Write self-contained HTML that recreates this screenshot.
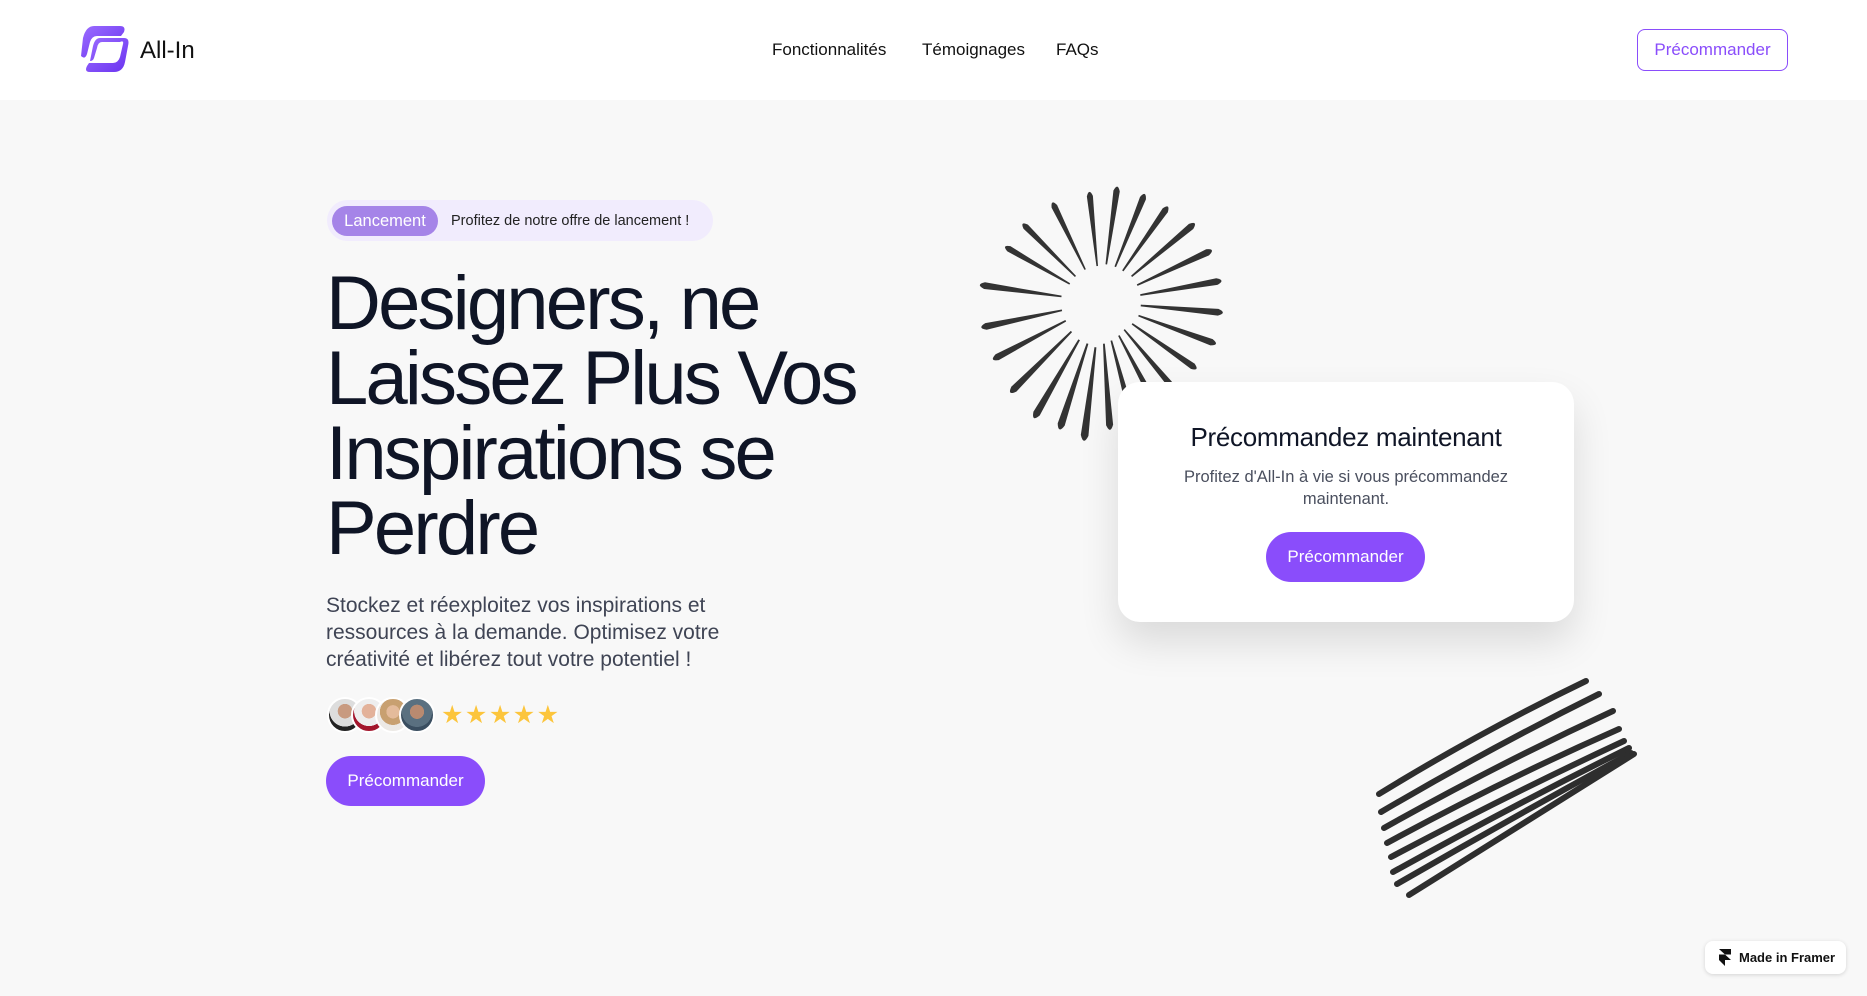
<!DOCTYPE html>
<html><head><meta charset="utf-8"><style>
*{margin:0;padding:0;box-sizing:border-box}
body{width:1867px;height:996px;overflow:hidden;background:#f8f8f8;font-family:"Liberation Sans",sans-serif;position:relative;color:#0f1526}
.nav{position:absolute;left:0;top:0;width:1867px;height:100px;background:#fff}
.abs{position:absolute}
.nl{position:absolute;top:40px;font-size:17px;color:#111}
.btn{position:absolute;background:#8a4dfb;color:#fff;border-radius:30px;display:flex;align-items:center;justify-content:center;font-size:17px}
h1{position:absolute;left:326px;top:266px;font-size:76px;line-height:75px;font-weight:400;letter-spacing:-2.8px;color:#0f1526;width:600px}
</style></head><body>
<div class="nav">
 <svg class="abs" style="left:80px;top:24px" width="52" height="51" viewBox="0 0 52 51">
  <defs><linearGradient id="g" x1="0" y1="0" x2="1" y2="1"><stop offset="0" stop-color="#9b6cff"/><stop offset="1" stop-color="#6a33f0"/></linearGradient></defs>
  <path d="M14 2 H40 Q46 2 44 8 L41 12 H17 Q12 12 10 18 L7 30 Q5 36 1 32 L3 14 Q6 2 14 2Z" fill="url(#g)"/>
  <path d="M20 14 H44 Q50 14 48 22 L45 38 Q43 48 34 48 H10 Q4 48 7 42 L9 39 H33 Q38 39 40 33 L43 20 Q44 16 40 18 H22 Q18 18 17 24 L14 34 Q13 37 10 37 L13 22 Q15 14 20 14Z" fill="url(#g)"/>
 </svg>
 <div class="abs" style="left:140px;top:37px;font-size:24px;color:#111">All-In</div>
 <div class="nl" style="left:772px">Fonctionnalités</div>
 <div class="nl" style="left:922px">Témoignages</div>
 <div class="nl" style="left:1056px">FAQs</div>
 <div class="abs" style="left:1637px;top:29px;width:151px;height:42px;border:1.5px solid #8a4dfb;border-radius:8px;color:#8a4dfb;font-size:17px;display:flex;align-items:center;justify-content:center">Précommander</div>
</div>

<div class="abs" style="left:327px;top:200px;width:386px;height:41px;background:#f1ecfd;border-radius:21px"></div>
<div class="abs" style="left:332px;top:206px;width:106px;height:30px;background:#a584e8;border-radius:15px;color:#fff;font-size:16.5px;display:flex;align-items:center;justify-content:center">Lancement</div>
<div class="abs" style="left:451px;top:213px;font-size:14.5px;color:#222">Profitez de notre offre de lancement !</div>

<h1>Designers, ne Laissez Plus Vos Inspirations se Perdre</h1>

<div class="abs" style="left:326px;top:592px;width:420px;font-size:21px;line-height:27px;color:#3f4454">Stockez et réexploitez vos inspirations et ressources à la demande. Optimisez votre créativité et libérez tout votre potentiel !</div>

<div class="abs" style="left:327px;top:697px;height:36px;display:flex">
 <div style="width:36px;height:36px;border-radius:50%;border:2px solid #fff;background:radial-gradient(circle at 50% 38%,#c89a80 0 28%,#ddd 29% 60%,#222 61%)"></div>
 <div style="margin-left:-12px;width:36px;height:36px;border-radius:50%;border:2px solid #fff;background:radial-gradient(circle at 50% 38%,#e3b29a 0 28%,#eee 29% 58%,#a3162c 59%)"></div>
 <div style="margin-left:-12px;width:36px;height:36px;border-radius:50%;border:2px solid #fff;background:radial-gradient(circle at 50% 40%,#e4bb9b 0 26%,#c8a070 27% 52%,#ece9e5 53%)"></div>
 <div style="margin-left:-12px;width:36px;height:36px;border-radius:50%;border:2px solid #fff;background:radial-gradient(circle at 50% 40%,#b98a70 0 28%,#5a7080 29% 60%,#3a4e60 61%)"></div>
</div>
<div class="abs" style="left:441px;top:700px;font-size:25px;color:#fcc53c;letter-spacing:1.5px">★★★★★</div>

<div class="btn" style="left:326px;top:756px;width:159px;height:50px">Précommander</div>

<svg class="abs" style="left:0;top:0" width="1867" height="996">
 <defs><path id="r" d="M38 -0.8 L112 -3.2 Q121 0 112 3.2 L38 0.8 Z" fill="#333"/></defs>
 <g transform="translate(1101,302)">
  <use href="#r" transform="rotate(-172) scale(1.05)"/>
  <use href="#r" transform="rotate(-150) scale(0.95)"/>
  <use href="#r" transform="rotate(-135) scale(0.95)"/>
  <use href="#r" transform="rotate(-116) scale(0.95)"/>
  <use href="#r" transform="rotate(-96) scale(0.95)"/>
  <use href="#r" transform="rotate(-82) scale(1.0)"/>
  <use href="#r" transform="rotate(-68) scale(1.0)"/>
  <use href="#r" transform="rotate(-55) scale(1.0)"/>
  <use href="#r" transform="rotate(-40) scale(1.05)"/>
  <use href="#r" transform="rotate(-25) scale(1.05)"/>
  <use href="#r" transform="rotate(-10) scale(1.05)"/>
  <use href="#r" transform="rotate(5) scale(1.05)"/>
  <use href="#r" transform="rotate(20) scale(1.05)"/>
  <use href="#r" transform="rotate(35) scale(1.0)"/>
  <use href="#r" transform="rotate(50) scale(0.95)"/>
  <use href="#r" transform="rotate(62) scale(1.0)"/>
  <use href="#r" transform="rotate(75) scale(1.05)"/>
  <use href="#r" transform="rotate(86) scale(1.1)"/>
  <use href="#r" transform="rotate(97) scale(1.2)"/>
  <use href="#r" transform="rotate(108) scale(1.15)"/>
  <use href="#r" transform="rotate(120) scale(1.15)"/>
  <use href="#r" transform="rotate(135) scale(1.1)"/>
  <use href="#r" transform="rotate(152) scale(1.05)"/>
  <use href="#r" transform="rotate(168) scale(1.05)"/>
 </g>
 <g stroke="#2e2e2e" stroke-width="6" stroke-linecap="round" fill="none">
  <path d="M1379 794 Q1480 732 1586 681"/>
  <path d="M1381 812 Q1490 748 1599 694"/>
  <path d="M1384 828 Q1498 764 1613 711"/>
  <path d="M1387 843 Q1503 780 1619 729"/>
  <path d="M1391 857 Q1508 795 1624 741"/>
  <path d="M1393 872 Q1512 806 1629 748"/>
  <path d="M1397 884 Q1515 816 1631 753"/>
  <path d="M1409 895 Q1522 824 1634 754"/>
 </g>
</svg>

<div class="abs" style="left:1118px;top:382px;width:456px;height:240px;background:#fff;border-radius:22px;box-shadow:0 20px 40px rgba(0,0,0,0.12)">
 <div style="position:absolute;left:0;width:100%;top:40px;text-align:center;font-size:26px;color:#0f1526;letter-spacing:-0.3px">Précommandez maintenant</div>
 <div style="position:absolute;left:40px;width:376px;top:84px;text-align:center;font-size:16.5px;line-height:22px;color:#4a4f5e">Profitez d'All-In à vie si vous précommandez maintenant.</div>
 <div class="btn" style="left:148px;top:150px;width:159px;height:50px">Précommander</div>
</div>

<div class="abs" style="left:1705px;top:941px;width:141px;height:33px;background:#fff;border-radius:8px;box-shadow:0 1px 4px rgba(0,0,0,0.15);font-size:13px;font-weight:bold;color:#111;display:flex;align-items:center;padding-left:34px">Made in Framer</div>
<svg class="abs" style="left:1719px;top:949px" width="12" height="17" viewBox="0 0 12 17"><path d="M0 0H12V5.5H6ZM0 5.5H6L12 11H6V17L0 11Z" fill="#111"/></svg>
</body></html>
